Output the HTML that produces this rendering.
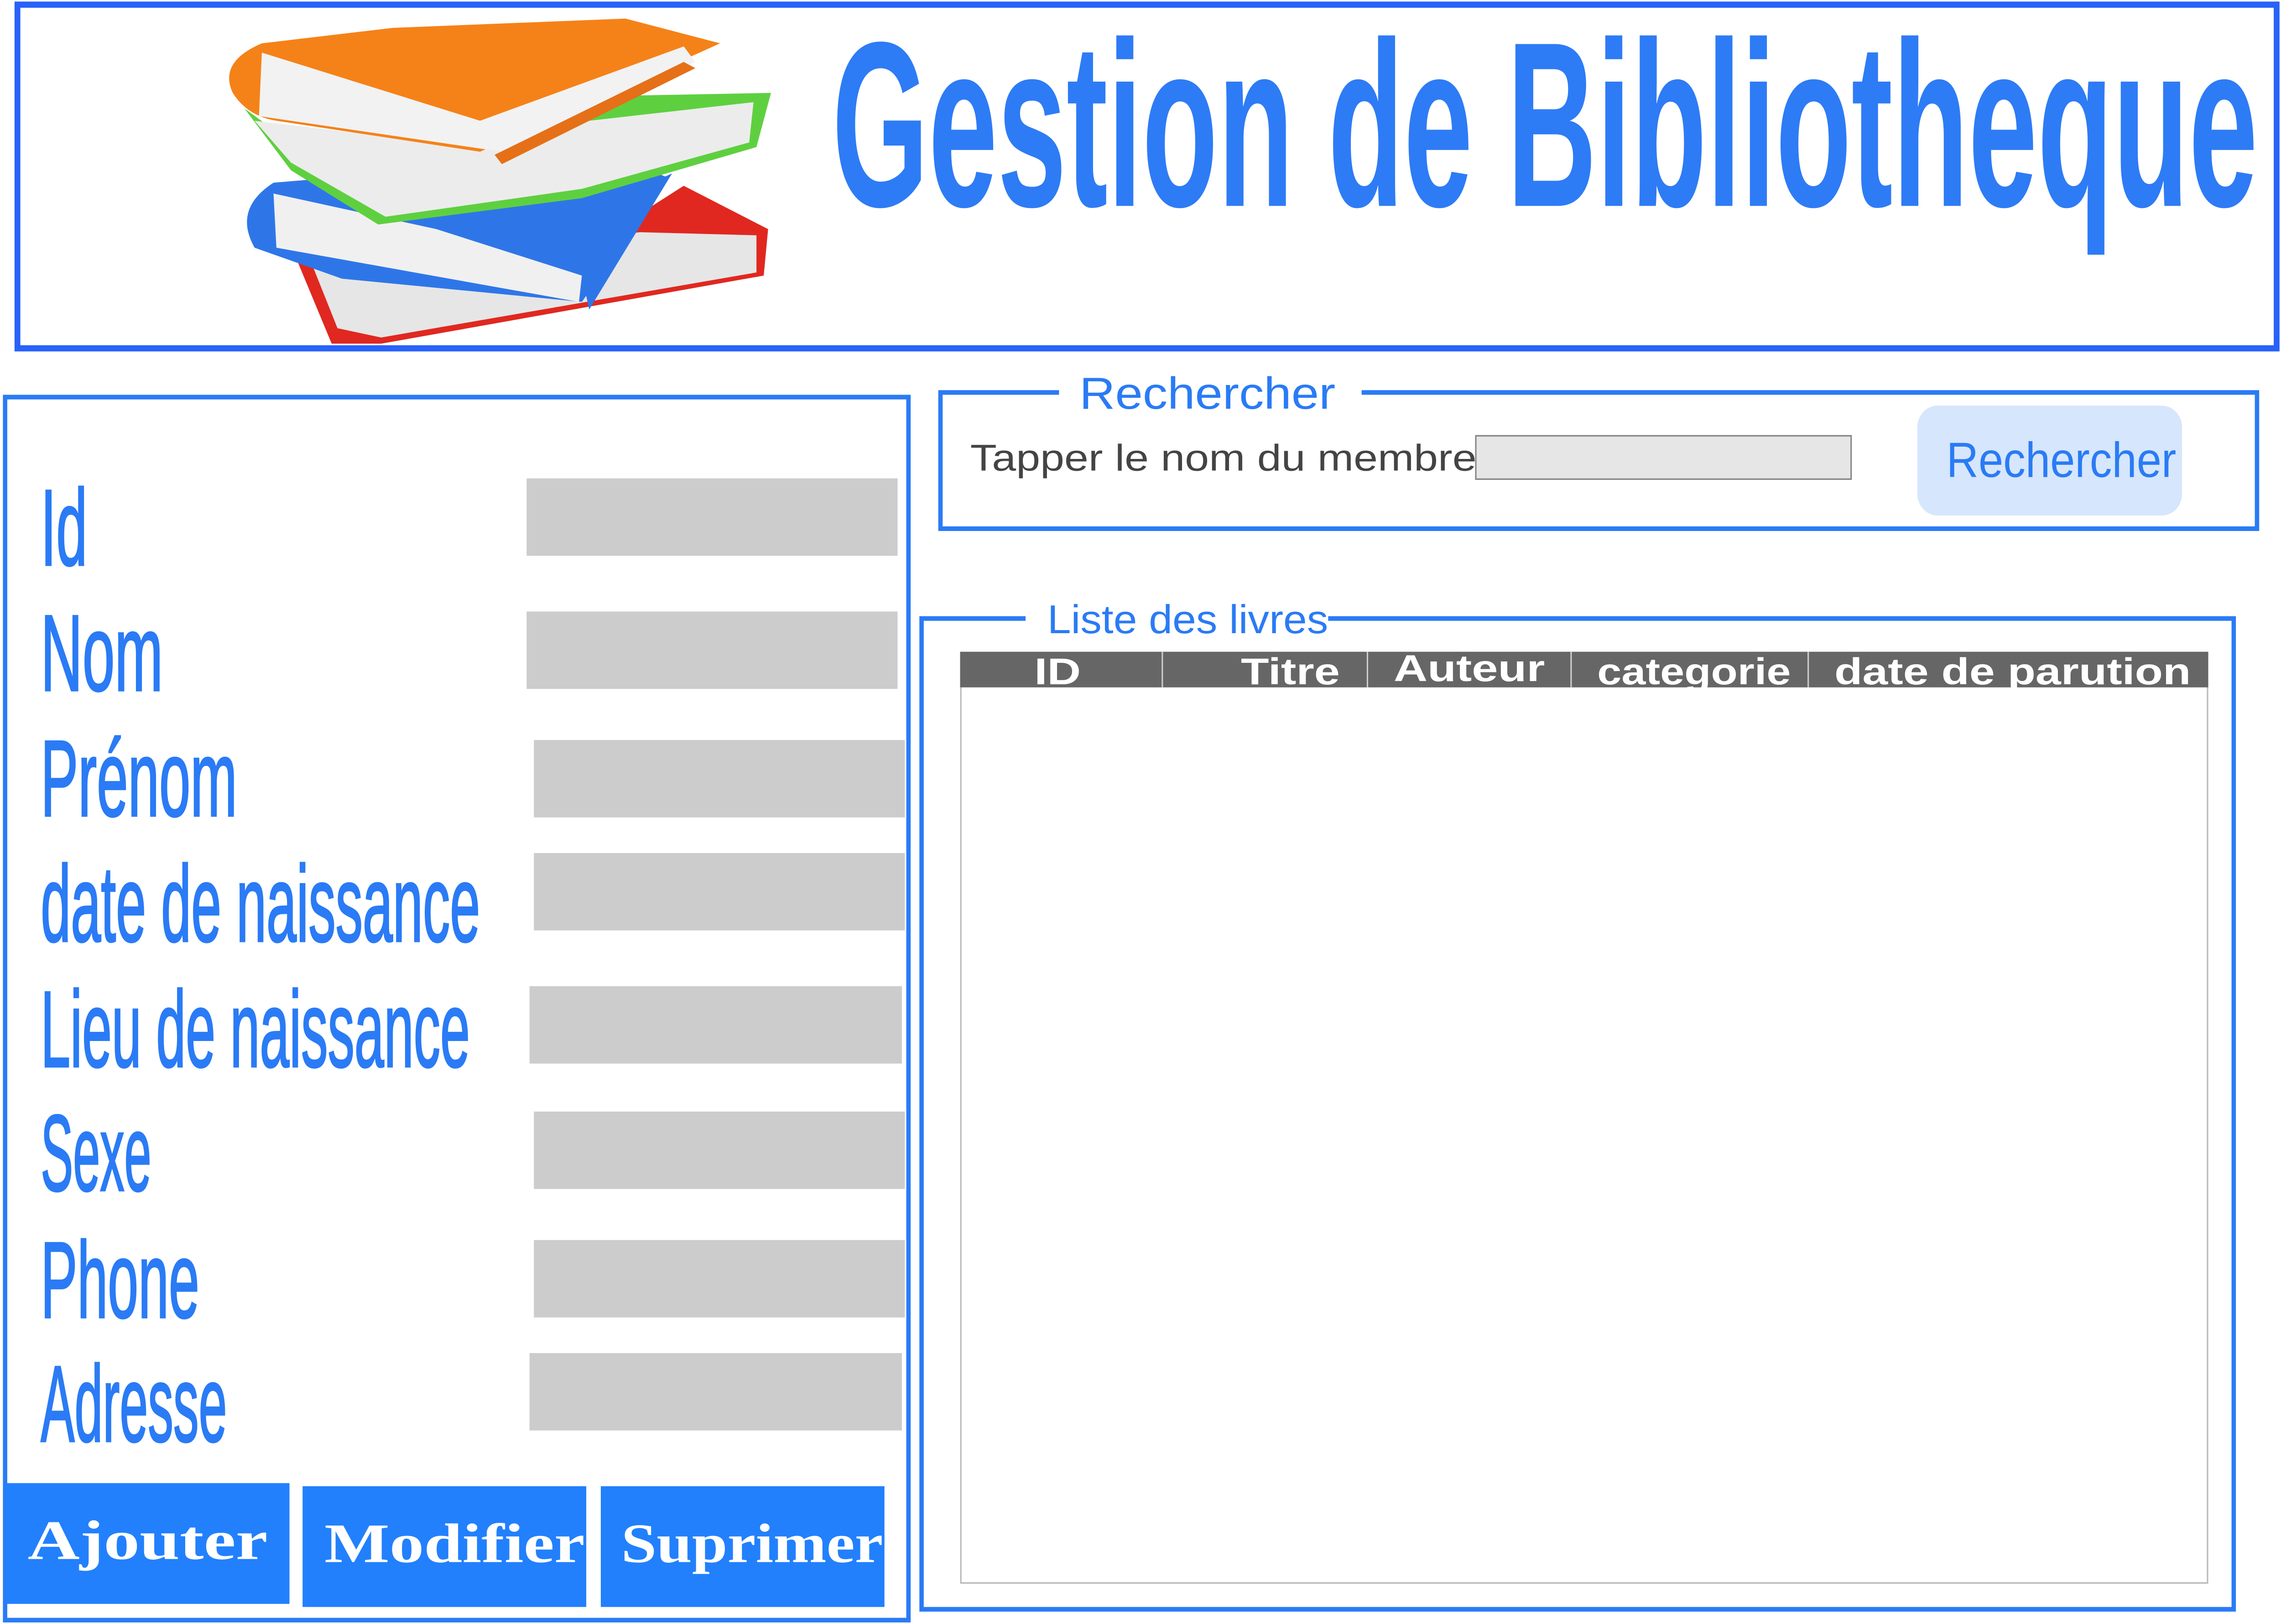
<!DOCTYPE html>
<html><head><meta charset="utf-8"><style>
html,body{margin:0;padding:0;background:#fff;width:100%;height:100%;overflow:hidden;}
svg{display:block;width:100vw;height:100vh;}
</style></head><body>
<svg viewBox="0 0 1568 1049" preserveAspectRatio="none" xmlns="http://www.w3.org/2000/svg">
<rect x="0" y="0" width="1568" height="1049" fill="#fff"/>
<rect x="12" y="3" width="1553" height="222" fill="none" stroke="#2862fb" stroke-width="4"/>
<g>
 <polygon points="205,170 420,150 470,120 528,148 525,178 262,222 228,222" fill="#e02820"/>
 <polygon points="215,172 440,150 520,152 520,176 262,218 232,212" fill="#e6e6e6"/>
 <path d="M188,118 Q160,135 175,160 L235,180 L400,195 L460,115 L420,100 Z" fill="#2e76e8"/>
 <polygon points="188,125 300,148 400,178 398,195 190,160" fill="#f0f0f0"/>
 <polygon points="400,178 455,115 462,112 405,200" fill="#2e76e8"/>
 <polygon points="168,70 200,92 320,75 420,62 530,60 520,95 400,128 260,145 200,110" fill="#5ed040"/>
 <polygon points="175,78 300,92 405,78 518,66 515,92 400,122 265,140 200,105" fill="#ececec"/>
 <path d="M180,28 Q150,40 160,60 Q170,75 190,78 L330,98 L495,28 L430,12 L270,18 Z" fill="#f58218"/>
 <polygon points="180,34 330,78 470,30 478,40 345,98 178,75" fill="#f2f2f2"/>
 <polygon points="340,100 470,40 478,44 345,106" fill="#e57018"/>
</g>
<text x="572" y="133" font-family="Liberation Sans, sans-serif" font-weight="bold" font-size="152" fill="#2e7bf6" textLength="980" lengthAdjust="spacingAndGlyphs">Gestion de Bibliotheque</text>

<rect x="3.5" y="256.5" width="621" height="790" fill="none" stroke="#2a7bf5" stroke-width="3"/>
<g font-family="Liberation Sans, sans-serif" font-size="70" fill="#2a7bf5" stroke="#2a7bf5" stroke-width="1.2">
 <text x="28" y="365" textLength="32" lengthAdjust="spacingAndGlyphs">Id</text>
 <text x="28" y="446" textLength="84" lengthAdjust="spacingAndGlyphs">Nom</text>
 <text x="28" y="527" textLength="135" lengthAdjust="spacingAndGlyphs">Prénom</text>
 <text x="28" y="608" textLength="302" lengthAdjust="spacingAndGlyphs">date de naissance</text>
 <text x="28" y="689" textLength="295" lengthAdjust="spacingAndGlyphs">Lieu de naissance</text>
 <text x="28" y="769" textLength="76" lengthAdjust="spacingAndGlyphs">Sexe</text>
 <text x="28" y="851" textLength="109" lengthAdjust="spacingAndGlyphs">Phone</text>
 <text x="28" y="931" textLength="128" lengthAdjust="spacingAndGlyphs">Adresse</text>
</g>
<g fill="#cccccc">
 <rect x="362" y="309" width="255" height="50"/>
 <rect x="362" y="395" width="255" height="50"/>
 <rect x="367" y="478" width="255" height="50"/>
 <rect x="367" y="551" width="255" height="50"/>
 <rect x="364" y="637" width="256" height="50"/>
 <rect x="367" y="718" width="255" height="50"/>
 <rect x="367" y="801" width="255" height="50"/>
 <rect x="364" y="874" width="256" height="50"/>
</g>
<g fill="#2280fd">
 <rect x="4" y="958" width="195" height="78"/>
 <rect x="208" y="960" width="195" height="78"/>
 <rect x="413" y="960" width="195" height="78"/>
</g>
<g font-family="Liberation Serif, serif" font-weight="bold" font-size="36" fill="#fff">
 <text x="19" y="1007" textLength="165" lengthAdjust="spacingAndGlyphs">Ajouter</text>
 <text x="223" y="1009" textLength="179" lengthAdjust="spacingAndGlyphs">Modifier</text>
 <text x="427" y="1009" textLength="180" lengthAdjust="spacingAndGlyphs">Suprimer</text>
</g>

<path d="M728,253.5 L646.5,253.5 L646.5,341.5 L1551.5,341.5 L1551.5,253.5 L936,253.5" fill="none" stroke="#2a7bf5" stroke-width="3"/>
<text x="742" y="264" font-family="Liberation Sans, sans-serif" font-size="29" fill="#2a7bf5" textLength="176" lengthAdjust="spacingAndGlyphs">Rechercher</text>
<text x="667" y="304" font-family="Liberation Sans, sans-serif" font-size="24" fill="#444" textLength="348" lengthAdjust="spacingAndGlyphs">Tapper le nom du membre</text>
<rect x="1014.5" y="281.5" width="258" height="28" fill="#e6e6e6" stroke="#888" stroke-width="1"/>
<rect x="1318" y="262" width="182" height="71" rx="14" fill="#d6e6fc"/>
<text x="1338" y="308" font-family="Liberation Sans, sans-serif" font-size="32" fill="#2a7bf5" textLength="158" lengthAdjust="spacingAndGlyphs">Rechercher</text>

<path d="M705,399.5 L633.5,399.5 L633.5,1039.5 L1535.5,1039.5 L1535.5,399.5 L913,399.5" fill="none" stroke="#2a7bf5" stroke-width="3"/>
<text x="720" y="409" font-family="Liberation Sans, sans-serif" font-size="26" fill="#2a7bf5" textLength="193" lengthAdjust="spacingAndGlyphs">Liste des livres</text>
<rect x="660.5" y="421.5" width="857" height="601" fill="#fff" stroke="#bbb" stroke-width="1"/>
<rect x="660" y="421" width="858" height="23" fill="#666"/>
<g stroke="#ccc" stroke-width="1">
 <line x1="799" y1="421" x2="799" y2="444"/>
 <line x1="940" y1="421" x2="940" y2="444"/>
 <line x1="1080" y1="421" x2="1080" y2="444"/>
 <line x1="1243" y1="421" x2="1243" y2="444"/>
</g>
<g font-family="Liberation Sans, sans-serif" font-weight="bold" font-size="24" fill="#fff">
 <text x="711" y="442" textLength="32" lengthAdjust="spacingAndGlyphs">ID</text>
 <text x="853" y="442" textLength="68" lengthAdjust="spacingAndGlyphs">Titre</text>
 <text x="958" y="440" textLength="104" lengthAdjust="spacingAndGlyphs">Auteur</text>
 <text x="1098" y="442" textLength="133" lengthAdjust="spacingAndGlyphs">categorie</text>
 <text x="1261" y="442" textLength="245" lengthAdjust="spacingAndGlyphs">date de parution</text>
</g>
</svg>
</body></html>
